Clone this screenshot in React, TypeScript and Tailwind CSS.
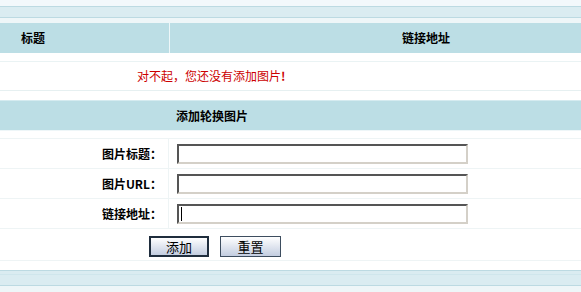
import React from "react";

const font = { fontFamily: '"Noto Sans CJK SC", "Liberation Sans", sans-serif' };

function FormRow({ label, caret }: { label: string; caret?: boolean }) {
  return (
    <div className="flex h-[30px] border-b border-[#eef4f5]">
      <div className="w-[169px] flex items-center justify-end pr-[6px] text-[12px] font-bold text-black border-r border-[#eef4f5]">
        {label}
      </div>
      <div className="flex items-center pl-[8px] pt-[1px]">
        <div className="relative w-[291px] h-[20px] bg-white border-2 border-t-[#555555] border-l-[#555555] border-r-[#d4d0c8] border-b-[#d4d0c8]">
          {caret && <span className="absolute left-[2px] top-[1px] w-[1px] h-[14px] bg-black" />}
        </div>
      </div>
    </div>
  );
}

export default function App() {
  return (
    <div className="w-[581px] h-[292px] overflow-hidden bg-white" style={font}>
      {/* top strip */}
      <div className="h-[6px] bg-[#f2f8fb]" />
      <div className="h-[1px] bg-[#bcdae2]" />
      <div className="h-[10px] bg-[#daecf1]" />
      <div className="h-[1px] bg-[#bcdae2]" />
      <div className="h-[5px] bg-[#eef6f8]" />
      {/* header */}
      <div className="flex h-[30px] bg-[#bcdee5] text-[12px] font-bold text-black">
        <div className="w-[169px] flex items-center pl-[21px]">标题</div>
        <div className="w-[1px] bg-[#eef7f9]" />
        <div className="flex-1 flex items-center pl-[232px]">链接地址</div>
      </div>
      <div className="h-[9px] border-b border-[#eaf3f4]" />
      <div className="h-[29px] flex items-center pl-[137px] text-[12px] text-[#cc0000] border-b border-[#e6f0f1]">
        对不起，您还没有添加图片<span className="font-bold">!</span>
      </div>
      <div className="h-[9px]" />
      <div className="h-[1px] bg-[#d5ebf0]" />
      <div className="h-[29px] bg-[#bcdee5] flex items-center pl-[176px] text-[12px] font-bold text-black">
        添加轮换图片
      </div>
      <div className="h-[9px] border-t border-[#eef6f8] border-b border-b-[#eef4f5]" />
      <FormRow label="图片标题：" />
      <FormRow label="图片URL：" />
      <FormRow label="链接地址：" caret />
      <div className="h-[32px] flex items-start pt-[7px] border-b border-[#eef4f5]">
        <div className="w-[149px]" />
        <button className="w-[60px] h-[21px] border-2 border-[#1f2d3d] bg-gradient-to-b from-white to-[#c3cde0] text-[13px] text-black leading-none flex items-center justify-center">
          添加
        </button>
        <div className="w-[11px]" />
        <button className="w-[61px] h-[21px] border border-[#3d4d5f] bg-gradient-to-b from-white to-[#c3cde0] text-[13px] text-black leading-none flex items-center justify-center">
          重置
        </button>
      </div>
      <div className="h-[9px]" />
      <div className="h-[1px] bg-[#bcdae2]" />
      <div className="h-[3px] bg-[#daecf1]" />
      <div className="h-[1px] bg-[#cfe6ec]" />
      <div className="h-[10px] bg-[#daecf1]" />
      <div className="h-[1px] bg-[#bcdae2]" />
      <div className="h-[10px] bg-[#eef6f8]" />
    </div>
  );
}
